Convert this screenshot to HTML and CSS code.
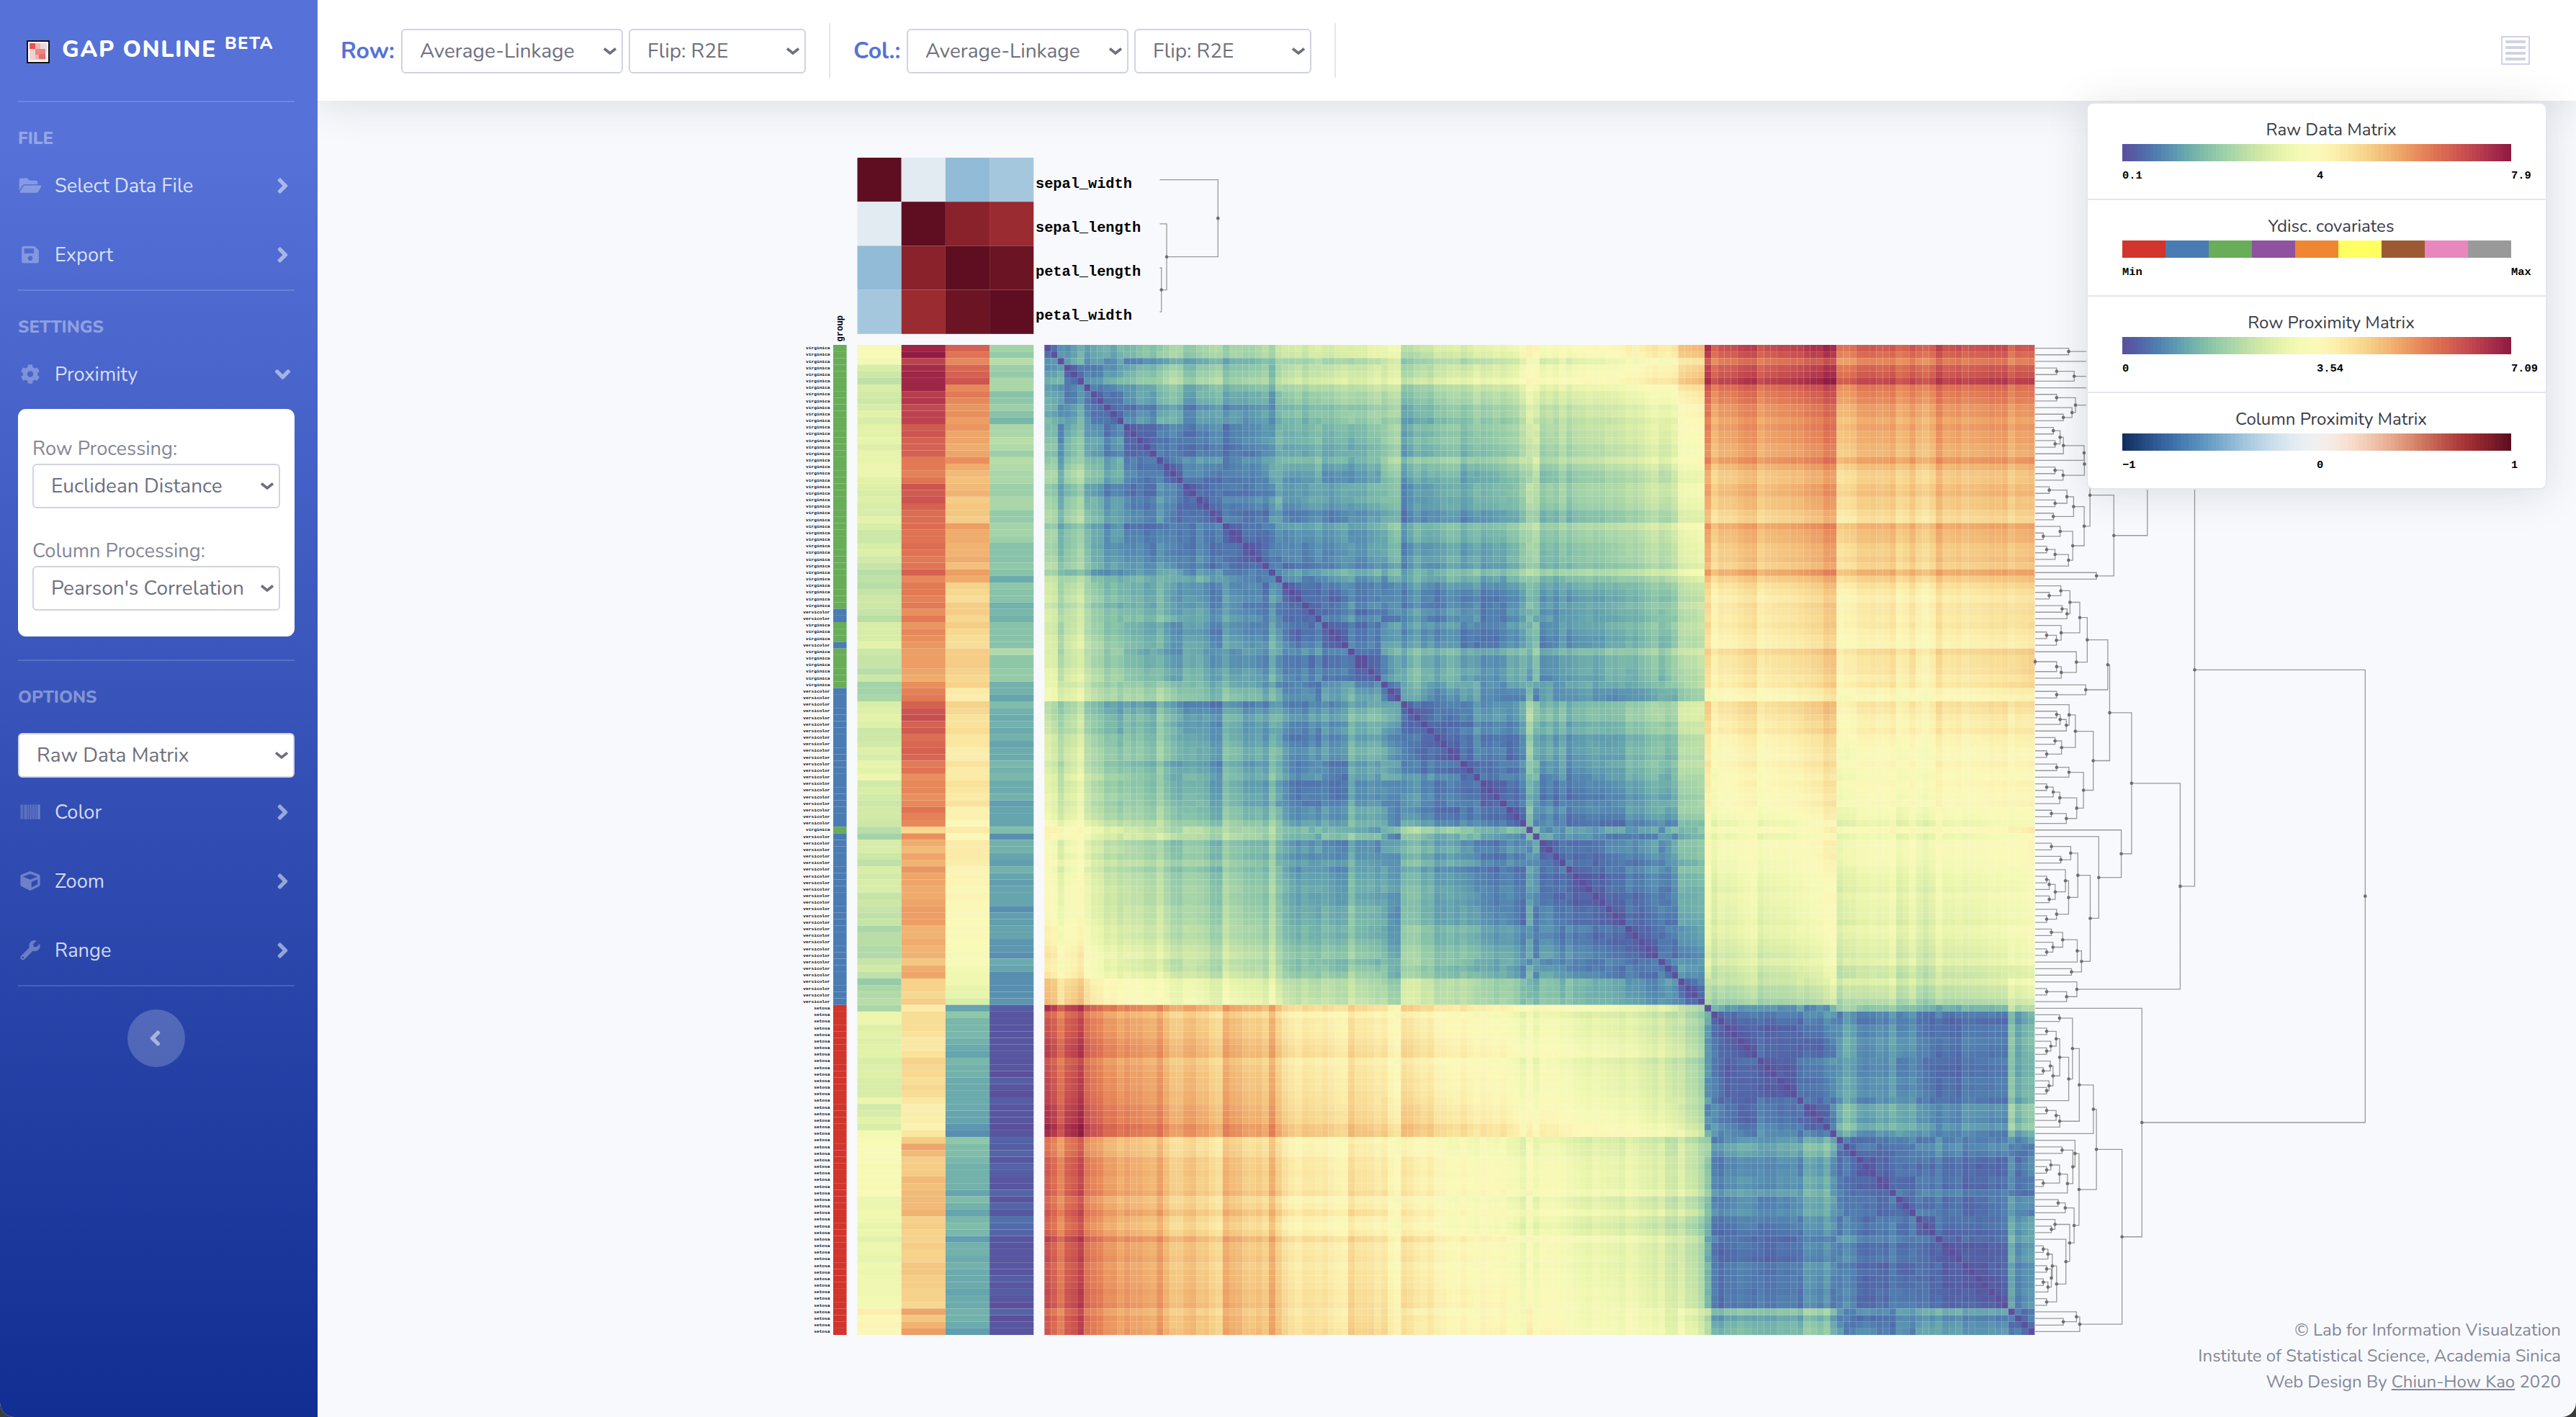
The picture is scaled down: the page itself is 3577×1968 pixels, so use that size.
FILE: index.html
```html
<!DOCTYPE html>
<html lang="en">
<head>
<meta charset="utf-8">
<title>GAP Online</title>
<link rel="stylesheet" href="styles.css">
</head>
<body>
<svg class="defs" width="0" height="0">
  <symbol id="right" viewBox="0 0 256 512"><path d="M224.3 273l-136 136c-9.4 9.4-24.6 9.4-33.9 0l-22.6-22.6c-9.4-9.4-9.4-24.6 0-33.9l96.4-96.4-96.4-96.4c-9.4-9.4-9.4-24.6 0-33.9L54.3 103c9.4-9.4 24.6-9.4 33.9 0l136 136c9.5 9.4 9.5 24.6.1 34z"/></symbol>
  <symbol id="caret" viewBox="0 0 20 12"><path d="M2 2.5L10 9L18 2.5" fill="none" stroke="currentColor" stroke-width="3.6"/></symbol>
</svg>
<div class="app">
  <nav class="sidebar">
    <a class="brand">
      <svg class="logo" viewBox="0 0 32 32"><rect width="32" height="32" fill="#111"/><rect x="2" y="2" width="28" height="28" fill="#fff"/><rect x="4" y="4" width="8" height="8" fill="#e5544f"/><rect x="12" y="4" width="7" height="8" fill="#f0b3b1"/><rect x="19" y="4" width="7" height="8" fill="#f2d4d6"/><rect x="4" y="12" width="8" height="14" fill="#f2d0d2"/><rect x="12" y="12" width="14" height="8" fill="#e88784"/><rect x="12" y="20" width="5" height="6" fill="#efb0ae"/><rect x="17" y="19" width="9" height="7" fill="#e5716d"/><rect x="26" y="4" width="2" height="22" fill="#dcdcf6"/><rect x="4" y="26" width="22" height="2" fill="#dcdcf6"/></svg>
      <span class="brand-name">GAP ONLINE</span><span class="brand-sup">BETA</span>
    </a>
    <hr class="rule">
    <div class="heading">FILE</div>
    <a class="link"><svg class="ico" viewBox="-32 0 640 512"><path d="M572.694 292.093L500.27 416.248A63.997 63.997 0 0 1 444.989 448H45.025c-18.523 0-30.064-20.093-20.731-36.093l72.424-124.155A64 64 0 0 1 152 256h399.964c18.523 0 30.064 20.093 20.73 36.093zM152 224h328v-48c0-26.51-21.49-48-48-48H272l-64-64H48C21.49 64 0 85.49 0 112v278.046l69.077-118.418C86.214 242.25 117.989 224 152 224z"/></svg><span>Select Data File</span><svg class="chev"><use href="#right"/></svg></a>
    <a class="link"><svg class="ico" viewBox="-96 0 640 512"><path d="M433.941 129.941l-83.882-83.882A48 48 0 0 0 316.118 32H48C21.49 32 0 53.49 0 80v352c0 26.51 21.49 48 48 48h352c26.51 0 48-21.49 48-48V163.882a48 48 0 0 0-14.059-33.941zM224 416c-35.346 0-64-28.654-64-64 0-35.346 28.654-64 64-64s64 28.654 64 64c0 35.346-28.654 64-64 64zm96-304.52V212c0 6.627-5.373 12-12 12H76c-6.627 0-12-5.373-12-12V108c0-6.627 5.373-12 12-12h228.52c3.183 0 6.235 1.264 8.485 3.515l3.48 3.48A11.996 11.996 0 0 1 320 111.48z"/></svg><span>Export</span><svg class="chev"><use href="#right"/></svg></a>
    <hr class="rule">
    <div class="heading">SETTINGS</div>
    <a class="link"><svg class="ico" viewBox="-64 0 640 512"><path d="M487.4 315.7l-42.6-24.6c4.3-23.2 4.3-47 0-70.2l42.6-24.6c4.9-2.8 7.1-8.6 5.5-14-11.1-35.6-30-67.8-54.7-94.6-3.8-4.1-10-5.1-14.8-2.3L380.8 110c-17.9-15.4-38.5-27.3-60.8-35.1V25.8c0-5.6-3.9-10.5-9.4-11.7-36.7-8.2-74.3-7.8-109.2 0-5.5 1.2-9.4 6.1-9.4 11.7V75c-22.2 7.9-42.8 19.8-60.8 35.1L88.7 85.5c-4.9-2.8-11-1.9-14.8 2.3-24.7 26.7-43.6 58.9-54.7 94.6-1.7 5.4.6 11.2 5.5 14L67.3 221c-4.3 23.2-4.3 47 0 70.2l-42.6 24.6c-4.9 2.8-7.1 8.6-5.5 14 11.1 35.6 30 67.8 54.7 94.6 3.8 4.1 10 5.1 14.8 2.3l42.6-24.6c17.9 15.4 38.5 27.3 60.8 35.1v49.2c0 5.6 3.9 10.5 9.4 11.7 36.7 8.2 74.3 7.8 109.2 0 5.5-1.2 9.4-6.1 9.4-11.7v-49.2c22.2-7.9 42.8-19.8 60.8-35.1l42.6 24.6c4.9 2.8 11 1.9 14.8-2.3 24.7-26.7 43.6-58.9 54.7-94.6 1.5-5.5-.7-11.3-5.6-14.1zM256 336c-44.1 0-80-35.9-80-80s35.9-80 80-80 80 35.9 80 80-35.9 80-80 80z"/></svg><span>Proximity</span><svg class="chev down"><use href="#right"/></svg></a>
    <div class="card">
      <label class="field-label">Row Processing:</label>
      <div class="select"><span>Euclidean Distance</span><svg class="caret"><use href="#caret"/></svg></div>
      <label class="field-label second">Column Processing:</label>
      <div class="select"><span>Pearson's Correlation</span><svg class="caret"><use href="#caret"/></svg></div>
    </div>
    <hr class="rule spaced">
    <div class="heading">OPTIONS</div>
    <div class="select options"><span>Raw Data Matrix</span><svg class="caret"><use href="#caret"/></svg></div>
    <a class="link"><svg class="ico" viewBox="0 0 34 28"><path opacity=".6" d="M3 3.5h4v21h-4zM8 3.5h3v21h-3zM13 3.5h3v21h-3z"/><path d="M11 3.5h1v21h-1zM17 3.5h1v21h-1zM19 3.5h1v21h-1zM21 3.5h1v21h-1zM23 3.5h1v21h-1zM25 3.5h1v21h-1zM27 3.5h1v21h-1zM28.500 3.5h2.500v21h-2.500z"/></svg><span>Color</span><svg class="chev"><use href="#right"/></svg></a>
    <a class="link"><svg class="ico" viewBox="-64 0 640 512"><path d="M239.1 6.3l-208 78c-18.7 7-31.1 25-31.1 45v225.1c0 18.2 10.3 34.8 26.5 42.9l208 104c13.5 6.8 29.4 6.8 42.9 0l208-104c16.3-8.1 26.5-24.8 26.5-42.9V129.3c0-20-12.4-37.9-31.1-44.9l-208-78C262 2.2 250 2.2 239.1 6.3zM256 68.4l192 72v1.1l-192 78-192-78v-1.1l192-72zm32 356V275.5l160-65v133.9l-160 80z"/></svg><span>Zoom</span><svg class="chev"><use href="#right"/></svg></a>
    <a class="link"><svg class="ico" viewBox="-64 0 640 512"><path d="M507.73 109.1c-2.24-9.03-13.54-12.09-20.12-5.51l-74.36 74.36-67.88-11.31-11.31-67.88 74.36-74.36c6.62-6.62 3.43-17.9-5.66-20.16-47.38-11.74-99.55.91-136.58 37.93-39.64 39.64-50.55 97.1-34.05 147.2L18.74 402.76c-24.99 24.99-24.99 65.51 0 90.5 24.99 24.99 65.51 24.99 90.5 0l213.21-213.21c50.12 16.71 107.47 5.68 147.37-34.22 37.07-37.07 49.7-89.32 37.91-136.73zM64 472c-13.25 0-24-10.75-24-24 0-13.26 10.75-24 24-24s24 10.74 24 24c0 13.25-10.75 24-24 24z"/></svg><span>Range</span><svg class="chev"><use href="#right"/></svg></a>
    <hr class="rule">
    <button class="toggle"><svg class="chev left"><use href="#right"/></svg></button>
  </nav>
  <main class="main">
    <header class="topbar">
      <span class="bar-label row-label">Row:</span>
      <div class="select wide"><span>Average-Linkage</span><svg class="caret"><use href="#caret"/></svg></div>
      <div class="select narrow"><span>Flip: R2E</span><svg class="caret"><use href="#caret"/></svg></div>
      <i class="vrule"></i>
      <span class="bar-label col-label">Col.:</span>
      <div class="select wide"><span>Average-Linkage</span><svg class="caret"><use href="#caret"/></svg></div>
      <div class="select narrow"><span>Flip: R2E</span><svg class="caret"><use href="#caret"/></svg></div>
      <i class="vrule"></i>
      <button class="menu"><i></i><i></i><i></i><i></i></button>
    </header>
    <svg class="stage" id="stage" viewBox="441 140 3136 1828"></svg>
    <section class="legend">
      <div class="legend-item"><h6>Raw Data Matrix</h6><div class="ramp" data-ramp="spectral"></div><div class="ticks"><b>0.1</b><b>4</b><b>7.9</b></div></div>
      <div class="legend-item"><h6>Ydisc. covariates</h6><div class="ramp" data-ramp="set1"></div><div class="ticks"><b>Min</b><b>Max</b></div></div>
      <div class="legend-item"><h6>Row Proximity Matrix</h6><div class="ramp" data-ramp="spectral"></div><div class="ticks"><b>0</b><b>3.54</b><b>7.09</b></div></div>
      <div class="legend-item"><h6>Column Proximity Matrix</h6><div class="ramp" data-ramp="rdbu"></div><div class="ticks"><b>−1</b><b>0</b><b>1</b></div></div>
    </section>
    <footer class="footer">
      <div>© Lab for Information Visualzation</div>
      <div>Institute of Statistical Science, Academia Sinica</div>
      <div>Web Design By <a>Chiun-How Kao</a> 2020</div>
    </footer>
  </main>
</div>
<script src="app.js"></script>
</body>
</html>
```
FILE: styles.css
```css
* { box-sizing: border-box; }
body { margin: 0; font-family: Nunito, Lato, "Open Sans", sans-serif; font-size: 28px; color: #858796; background: #3b3b3d; }
.defs { position: absolute; }
.app { display: flex; width: 3577px; height: 1968px; overflow: hidden; background: #f8f9fd; border-radius: 0 0 20px 20px; }
.sidebar { position: relative; z-index: 1; flex: none; width: 441px; padding: 0 32px 0 25px; background: linear-gradient(180deg, #5672d8 10%, #122e93 100%); display: flex; flex-direction: column; }
.brand { display: flex; align-items: center; height: 140px; padding: 4px 0 0 12px; color: #fff; font-weight: 800; font-size: 32px; letter-spacing: 1.6px; }
.logo { width: 32px; height: 32px; margin-right: 17px; }
.brand-name { line-height: 40px; margin-top: -6px; white-space: nowrap; }
.brand-sup { font-size: 24px; letter-spacing: 1.4px; margin: -25px 0 0 11px; }
.rule { flex: none; width: 100%; height: 2px; margin: 0; border: 0; background: rgba(255,255,255,.15); }
.rule.spaced { margin-top: 32px; }
.heading { flex: none; height: 68px; padding-top: 33px; line-height: 34px; font-size: 24px; font-weight: 800; color: rgba(255,255,255,.4); }
.link { flex: none; display: flex; align-items: center; height: 96px; color: rgba(255,255,255,.8); font-size: 27.2px; }
.ico { width: 34px; height: 27.2px; margin-right: 17px; fill: rgba(255,255,255,.3); }
.chev { width: 17px; height: 34px; margin: 0 8px 0 auto; fill: rgba(255,255,255,.5); }
.chev.down { transform: rotate(90deg); }
.card { flex: none; height: 316px; padding: 36px 20px; background: #fff; border-radius: 11px; font-size: 27.2px; }
.field-label { display: block; line-height: 40px; }
.field-label.second { margin-top: 40px; }
.select { display: flex; align-items: center; justify-content: space-between; flex: none; height: 62px; padding: 0 6px 0 24px; border: 2px solid #d1d3e2; border-radius: 6px; background: #fff; color: #6e707e; font-size: 28px; white-space: nowrap; }
.caret { width: 20px; height: 12px; color: #6e707e; }
.options { margin-top: 32px; }
.toggle { align-self: center; flex: none; width: 80px; height: 80px; margin: 32px 0 0; padding: 0; border: 0; border-radius: 50%; background: rgba(255,255,255,.2); display: flex; align-items: center; justify-content: center; }
.chev.left { margin: 0 4px 0 0; transform: rotate(180deg); }
.main { position: relative; flex: 1; display: flex; flex-direction: column; min-width: 0; }
.topbar { position: relative; flex: none; display: flex; align-items: center; height: 140px; padding: 0 64px 0 32px; background: #fff; box-shadow: 0 5px 56px rgba(58,59,69,.15); }
.bar-label { font-size: 32px; font-weight: 700; color: #5672d8; }
.row-label { width: 84px; }
.col-label { width: 74px; }
.wide { width: 308px; margin-right: 8px; }
.narrow { width: 246px; }
.topbar .select { margin-top: 2px; }
.vrule { width: 2px; height: 76px; margin: 0 32px; background: #e3e6f0; }
.menu { width: 40px; height: 40px; margin: 0 0 0 auto; padding: 0 4px; border: 2px solid #d1d1ec; background: #fff; display: flex; flex-direction: column; justify-content: center; gap: 4px; }
.menu i { height: 4px; background: #d1d3e2; border-radius: 1px; }
.stage { display: block; flex: none; width: 3136px; height: 1828px; }
.stage text { font-family: "Courier New", "Liberation Mono", monospace; font-weight: 700; fill: #000; }
.legend { position: absolute; top: 142px; right: 40px; width: 640px; border: 2px solid #e3e6f0; border-radius: 10px; background: #fff; box-shadow: 0 5px 56px rgba(58,59,69,.15); }
.legend-item { height: 134px; padding: 16px 48px 0; border-bottom: 2px solid #e3e6f0; }
.legend-item:last-child { height: 132px; border: 0; }
.legend h6 { margin: 0 -40px 0 0; font-size: 24px; font-weight: 400; line-height: 40px; text-align: center; color: #3a3b45; }
.ramp { height: 24px; }
.ticks { display: flex; justify-content: space-between; margin-top: 10px; font: 700 15.4px/20px "Courier New", "Liberation Mono", monospace; color: #000; }
.ticks b { width: 0; white-space: nowrap; }
.footer { position: absolute; right: 21px; bottom: 31px; font-size: 24px; line-height: 36px; text-align: right; }
.footer a { text-decoration: underline; }
```
FILE: app.js
```js
// Fisher's iris measurements: sepal length, sepal width, petal length, petal width (in mm).
const SPECIES = ['setosa', 'versicolor', 'virginica'];
const IRIS = [
  '51 35 14 2,49 30 14 2,47 32 13 2,46 31 15 2,50 36 14 2,54 39 17 4,46 34 14 3,50 34 15 2,44 29 14 2,49 31 15 1,54 37 15 2,48 34 16 2,48 30 14 1,43 30 11 1,58 40 12 2,57 44 15 4,54 39 13 4,51 35 14 3,57 38 17 3,51 38 15 3,54 34 17 2,51 37 15 4,46 36 10 2,51 33 17 5,48 34 19 2,50 30 16 2,50 34 16 4,52 35 15 2,52 34 14 2,47 32 16 2,48 31 16 2,54 34 15 4,52 41 15 1,55 42 14 2,49 31 15 2,50 32 12 2,55 35 13 2,49 36 14 1,44 30 13 2,51 34 15 2,50 35 13 3,45 23 13 3,44 32 13 2,50 35 16 6,51 38 19 4,48 30 14 3,51 38 16 2,46 32 14 2,53 37 15 2,50 33 14 2',
  '70 32 47 14,64 32 45 15,69 31 49 15,55 23 40 13,65 28 46 15,57 28 45 13,63 33 47 16,49 24 33 10,66 29 46 13,52 27 39 14,50 20 35 10,59 30 42 15,60 22 40 10,61 29 47 14,56 29 36 13,67 31 44 14,56 30 45 15,58 27 41 10,62 22 45 15,56 25 39 11,59 32 48 18,61 28 40 13,63 25 49 15,61 28 47 12,64 29 43 13,66 30 44 14,68 28 48 14,67 30 50 17,60 29 45 15,57 26 35 10,55 24 38 11,55 24 37 10,58 27 39 12,60 27 51 16,54 30 45 15,60 34 45 16,67 31 47 15,63 23 44 13,56 30 41 13,55 25 40 13,55 26 44 12,61 30 46 14,58 26 40 12,50 23 33 10,56 27 42 13,57 30 42 12,57 29 42 13,62 29 43 13,51 25 30 11,57 28 41 13',
  '63 33 60 25,58 27 51 19,71 30 59 21,63 29 56 18,65 30 58 22,76 30 66 21,49 25 45 17,73 29 63 18,67 25 58 18,72 36 61 25,65 32 51 20,64 27 53 19,68 30 55 21,57 25 50 20,58 28 51 24,64 32 53 23,65 30 55 18,77 38 67 22,77 26 69 23,60 22 50 15,69 32 57 23,56 28 49 20,77 28 67 20,63 27 49 18,67 33 57 21,72 32 60 18,62 28 48 18,61 30 49 18,64 28 56 21,72 30 58 16,74 28 61 19,79 38 64 20,64 28 56 22,63 28 51 15,61 26 56 14,77 30 61 23,63 34 56 24,64 31 55 18,60 30 48 18,69 31 54 21,67 31 56 24,69 31 51 23,58 27 51 19,68 32 59 23,67 33 57 25,67 30 52 23,63 25 50 19,65 30 52 20,62 34 54 23,59 30 51 18'
].flatMap((block, s) => block.split(',').map(r => ({ v: r.split(' ').map(x => x / 10), s })));

// ---- colour ramps ----
const RAMPS = {
  spectral: '5e4fa2 3288bd 66c2a5 abdda4 e6f598 ffffbf fee08b fdae61 f46d43 d53e4f 9e0142',
  rdbu: '053061 2166ac 4393c3 92c5de d1e5f0 f7f7f7 fddbc7 f4a582 d6604d b2182b 67001f',
  set1: 'e41a1c 377eb8 4daf4a 984ea3 ff7f00 ffff33 a65628 f781bf 999999'
};
const hex = h => [0, 2, 4].map(i => parseInt(h.substr(i, 2), 16));
for (const k in RAMPS) RAMPS[k] = RAMPS[k].split(' ').map(hex);
// Wide-gamut display values for an sRGB triple.
function display(c) {
  const [r, g, b] = c.map(x => { x = Math.max(0, Math.min(255, x)) / 255; return x <= .04045 ? x / 12.92 : ((x + .055) / 1.055) ** 2.4; });
  const out = [.8225 * r + .1774 * g, .0332 * r + .9669 * g, .0171 * r + .0724 * g + .9108 * b]
    .map(x => Math.round(255 * (x <= .0031308 ? x * 12.92 : 1.055 * x ** (1 / 2.4) - .055)));
  return `rgb(${out})`;
}
// Uniform cubic B-spline through the ramp's control colours.
function ramp(name, t) {
  const c = RAMPS[name], n = c.length - 1;
  t = Math.max(0, Math.min(1, t));
  const i = Math.min(n - 1, Math.floor(t * n)), u = t * n - i;
  return display([0, 1, 2].map(k => {
    const v1 = c[i][k], v2 = c[i + 1][k];
    const v0 = i > 0 ? c[i - 1][k] : 2 * v1 - v2, v3 = i < n - 1 ? c[i + 2][k] : 2 * v2 - v1;
    return ((1 - 3 * u + 3 * u * u - u ** 3) * v0 + (4 - 6 * u * u + 3 * u ** 3) * v1 + (1 + 3 * u + 3 * u * u - 3 * u ** 3) * v2 + u ** 3 * v3) / 6;
  }));
}
document.querySelectorAll('.ramp').forEach(el => {
  const name = el.dataset.ramp, stops = [], n = 100;
  if (name === 'set1') RAMPS.set1.forEach((c, i) => stops.push(`${display(c)} ${i / 9 * 100}% ${(i + 1) / 9 * 100}%`));
  else for (let i = 0; i < n; i++) stops.push(`${ramp(name, i / (n - 1))} ${i / n * 100}% ${(i + 1) / n * 100}%`);
  el.style.background = `linear-gradient(90deg, ${stops})`;
});

// ---- statistics ----
const dist = (a, b) => Math.sqrt(a.reduce((s, x, i) => s + (x - b[i]) ** 2, 0));
function corr(a, b) {
  const n = a.length, ma = a.reduce((s, x) => s + x) / n, mb = b.reduce((s, x) => s + x) / n;
  let ab = 0, aa = 0, bb = 0;
  for (let i = 0; i < n; i++) { const x = a[i] - ma, y = b[i] - mb; ab += x * y; aa += x * x; bb += y * y; }
  return ab / Math.sqrt(aa * bb);
}
const pairwise = (rows, f) => rows.map(a => rows.map(b => f(a, b)));

function eigen(M) {
  const found = [];
  for (let k = 0; k < 3; k++) {
    let v = M.map((_, i) => Math.sin(i * 1.7 + k + 1)), l = 0;
    for (let it = 0; it < 120; it++) {
      let w = M.map(row => row.reduce((s, x, j) => s + x * v[j], 0));
      found.forEach(e => { const d = w.reduce((s, x, j) => s + x * e.v[j], 0); w = w.map((x, j) => x - d * e.v[j]); });
      l = Math.hypot(...w);
      v = w.map(x => x / (l || 1));
    }
    found.push({ l, v });
  }
  return found;
}
// Rank-two elliptical seriation.
function r2e(P) {
  let M = P, e;
  for (let it = 0; it < 20; it++) {
    M = pairwise(M, corr);
    e = eigen(M);
    if (e[2].l / e[0].l < 1e-3) break;
  }
  const pts = M.map((_, i) => ({ i, a: Math.atan2(e[1].v[i] * Math.sqrt(e[1].l), e[0].v[i] * Math.sqrt(e[0].l)) })).sort((p, q) => p.a - q.a);
  let cut = 0, best = -1;
  pts.forEach((p, k) => { const q = pts[(k + 1) % pts.length]; const g = (q.a - p.a + 2 * Math.PI) % (2 * Math.PI); if (g > best) { best = g; cut = k + 1; } });
  const order = pts.slice(cut).concat(pts.slice(0, cut)).map(p => p.i), rank = [];
  order.forEach((id, k) => rank[id] = k);
  return rank;
}
// Average-linkage agglomeration; returns the root of the merge tree.
function cluster(P) {
  const D = P.map(r => r.slice()), nodes = P.map((_, i) => ({ ids: [i], h: 0 })), live = P.map((_, i) => i);
  while (live.length > 1) {
    let bi = 0, bj = 1, m = Infinity;
    for (let x = 0; x < live.length; x++) for (let y = x + 1; y < live.length; y++) {
      const d = D[live[x]][live[y]];
      if (d < m - 1e-9) { m = d; bi = x; bj = y; }
    }
    const a = live[bi], b = live[bj], A = nodes[a], B = nodes[b];
    live.forEach(k => { if (k !== a && k !== b) D[a][k] = D[k][a] = (D[a][k] * A.ids.length + D[b][k] * B.ids.length) / (A.ids.length + B.ids.length); });
    nodes[a] = { ids: A.ids.concat(B.ids), h: m, kids: [A, B] };
    live.splice(bj, 1);
  }
  return nodes[live[0]];
}
const mean = (ids, rank) => ids.reduce((s, i) => s + rank[i], 0) / ids.length;
function flip(node, rank) {
  if (!node.kids) return node.ids;
  if (mean(node.kids[0].ids, rank) > mean(node.kids[1].ids, rank)) node.kids.reverse();
  return node.kids.flatMap(k => flip(k, rank));
}

// ---- drawing ----
const out = [];
const rect = (x, y, w, h, f) => out.push(`<rect x="${x.toFixed(2)}" y="${y.toFixed(2)}" width="${w.toFixed(2)}" height="${h.toFixed(2)}" fill="${f}"/>`);
function dendrogram(root, order, x0, y0, step, scale) {
  const lines = [], dots = [], pos = [];
  order.forEach((id, k) => pos[id] = y0 + (k + .5) * step);
  (function walk(n) {
    if (!n.kids) return { x: x0, y: pos[n.ids[0]] };
    const [a, b] = n.kids.map(walk), x = x0 + n.h * scale, y = (a.y + b.y) / 2;
    lines.push(`M${a.x} ${a.y}H${x}V${b.y}H${b.x}`);
    dots.push(`<circle cx="${x}" cy="${y}" r="2.3"/>`);
    return { x, y };
  })(root);
  out.push(`<path d="${lines.join('')}" fill="none" stroke="#999" stroke-width="1.3"/><g fill="#6e6e6e">${dots.join('')}</g>`);
}

const P = pairwise(IRIS.map(r => r.v), dist);
const linked = P.map(r => r.slice());
for (const [i, j] of [[6, 11], [0, 27]]) linked[i][j] = linked[j][i] += 1e-7;
const tree = cluster(linked), rank = r2e(P);
if (mean([...Array(50).keys()], rank) < 74.5) rank.forEach((r, i) => rank[i] = 149 - r);
// Near-ties on the ellipse.
Object.assign(rank, { 35: 135, 43: 108.5, 12: 132, 13: 126 });
const rows = flip(tree, rank);

const NAMES = ['sepal_length', 'sepal_width', 'petal_length', 'petal_width'];
const columns = [0, 1, 2, 3].map(c => IRIS.map(r => r.v[c]));
const C = pairwise(columns, corr);
const colTree = cluster(C.map(r => r.map(x => 1 - x)));
const cols = flip(colTree, [1, 0, 2, 3]);

const CELL = 61.2, ROW = 9.167;
cols.forEach((a, i) => {
  cols.forEach((b, j) => rect(1190.5 + j * CELL, 219 + i * CELL, CELL, CELL, ramp('rdbu', (C[a][b] + 1) / 2)));
  out.push(`<text x="1438" y="${219 + i * CELL + 41.5}" font-size="20.3">${NAMES[a]}</text>`);
});
out.push('<text transform="translate(1170 474.5) rotate(-90)" font-size="12.2">group</text>');
dendrogram(colTree, cols, 1610.4, 219, CELL, 62);

rows.forEach((id, k) => {
  const y = 479 + k * ROW, r = IRIS[id];
  out.push(`<text x="1152.5" y="${(y + 6.3).toFixed(2)}" font-size="6.2" text-anchor="end">${SPECIES[r.s]}</text>`);
  rect(1157, y, 18.6, ROW, display(RAMPS.set1[r.s]));
  cols.forEach((c, j) => rect(1190.5 + j * CELL, y, CELL, ROW, ramp('spectral', (r.v[c] - .1) / 7.8)));
  rows.forEach((other, j) => rect(1450.3 + j * ROW, y, ROW, ROW, ramp('spectral', P[id][other] / 7.085)));
});
dendrogram(tree, rows, 2826, 479, ROW, 112.8);
document.getElementById('stage').innerHTML = out.join('');
```
